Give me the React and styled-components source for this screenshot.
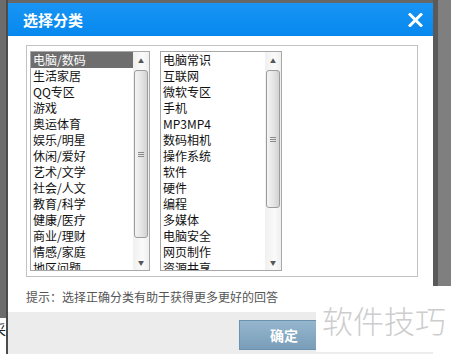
import React from "react";
import styled, { createGlobalStyle } from "styled-components";

const GlobalStyle = createGlobalStyle`
  html, body {
    margin: 0;
    padding: 0;
    background: #ffffff;
  }
  body {
    font-family: "Noto Sans CJK SC", "Liberation Sans", sans-serif;
  }
`;

const mainItems = [
  "电脑/数码",
  "生活家居",
  "QQ专区",
  "游戏",
  "奥运体育",
  "娱乐/明星",
  "休闲/爱好",
  "艺术/文学",
  "社会/人文",
  "教育/科学",
  "健康/医疗",
  "商业/理财",
  "情感/家庭",
  "地区问题",
];

const subItems = [
  "电脑常识",
  "互联网",
  "微软专区",
  "手机",
  "MP3MP4",
  "数码相机",
  "操作系统",
  "软件",
  "硬件",
  "编程",
  "多媒体",
  "电脑安全",
  "网页制作",
  "资源共享",
];

const ListBox = ({ items, width, thumbHeight, selected }) => (
  <Box $width={width}>
    <Items>
      {items.map((item, i) => (
        <Item key={item} $selected={i === selected}>
          {item}
        </Item>
      ))}
    </Items>
    <ScrollBar>
      <Arrow>▲</Arrow>
      <Track>
        <Thumb style={{ height: thumbHeight }}>
          <Grip />
        </Thumb>
      </Track>
      <Arrow>▼</Arrow>
    </ScrollBar>
  </Box>
);

const App = () => {
  return (
    <>
      <GlobalStyle />
      <Page>
        <LeftStrip>
          <StripTop />
          <StripBottom>采</StripBottom>
        </LeftStrip>

        <Dialog>
          <TitleBar>
            <Title>选择分类</Title>
            <CloseButton aria-label="close">
              <svg width="15" height="14" viewBox="0 0 15 14">
                <path
                  d="M2 1.5 L13 12.5 M13 1.5 L2 12.5"
                  stroke="#ffffff"
                  strokeWidth="3"
                  strokeLinecap="square"
                  fill="none"
                />
              </svg>
            </CloseButton>
          </TitleBar>

          <Body>
            <Frame>
              <ListBox items={mainItems} width={120} thumbHeight={168} selected={0} />
              <ListBox items={subItems} width={122} thumbHeight={138} selected={-1} />
            </Frame>
            <Tip>提示：选择正确分类有助于获得更多更好的回答</Tip>
          </Body>

          <Footer>
            <OkButton>确定</OkButton>
          </Footer>
        </Dialog>

        <RightStrip>
          <RightTop />
        </RightStrip>

        <Watermark>软件技巧</Watermark>
      </Page>
    </>
  );
};

// Styled Components
const Page = styled.div`
  position: relative;
  width: 451px;
  height: 354px;
  overflow: hidden;
  display: grid;
  grid-template-columns: 8px 425px 1fr;
  background: #ffffff;
`;

const LeftStrip = styled.div`
  display: flex;
  flex-direction: column;
  border-right: 2px solid #4b4b4b;
`;

const StripTop = styled.div`
  flex: 1;
  background: #6c6c6c;
`;

const StripBottom = styled.div`
  height: 36px;
  background: #ffffff;
  overflow: hidden;
  font-size: 14px;
  line-height: 22px;
  color: #222;
  text-indent: -8px;
  white-space: nowrap;
`;

const Dialog = styled.div`
  display: flex;
  flex-direction: column;
  padding-top: 3px;
  background: linear-gradient(#676767 0, #676767 3px, transparent 3px);
`;

const TitleBar = styled.div`
  height: 33px;
  display: flex;
  align-items: center;
  justify-content: space-between;
  padding: 0 10px 0 15px;
  background: linear-gradient(#1995f4, #0688ee);
`;

const Title = styled.div`
  color: #ffffff;
  font-size: 15px;
  font-weight: 700;
`;

const CloseButton = styled.div`
  width: 15px;
  height: 14px;
  display: flex;
`;

const Body = styled.div`
  height: 276px;
  box-sizing: border-box;
  padding: 9px 15px 0 18px;
  background: #ffffff;
`;

const Frame = styled.div`
  height: 232px;
  box-sizing: border-box;
  border: 1px solid #c2c2c2;
  padding: 5px 3px;
  display: flex;
  gap: 10px;
`;

const Box = styled.div`
  width: ${({ $width }) => $width}px;
  height: 220px;
  box-sizing: border-box;
  border: 1px solid #a8a8a8;
  display: flex;
  overflow: hidden;
`;

const Items = styled.div`
  flex: 1;
  overflow: hidden;
`;

const Item = styled.div`
  height: 16px;
  line-height: 16px;
  padding-left: 2px;
  font-size: 12px;
  white-space: nowrap;
  color: ${({ $selected }) => ($selected ? "#ffffff" : "#111111")};
  background: ${({ $selected }) => ($selected ? "#6e6e6e" : "transparent")};
`;

const ScrollBar = styled.div`
  width: 16px;
  display: flex;
  flex-direction: column;
  background: linear-gradient(90deg, #f0f0f0, #fafafa 60%, #efefef);
`;

const Arrow = styled.div`
  height: 16px;
  display: flex;
  align-items: center;
  justify-content: center;
  font-size: 6px;
  color: #555555;
`;

const Track = styled.div`
  flex: 1;
  padding: 2px 1px 0;
`;

const Thumb = styled.div`
  box-sizing: border-box;
  border: 1px solid #9c9c9c;
  border-radius: 3px;
  background: linear-gradient(90deg, #f4f4f4, #e6e6e6 50%, #d2d2d2);
  display: flex;
  align-items: center;
  justify-content: center;
`;

const Grip = styled.div`
  width: 6px;
  height: 5px;
  background: repeating-linear-gradient(#8a8a8a 0, #8a8a8a 1px, transparent 1px, transparent 2px);
`;

const Tip = styled.div`
  height: 35px;
  box-sizing: border-box;
  padding-top: 12px;
  line-height: 16px;
  font-size: 12px;
  color: #555555;
`;

const Footer = styled.div`
  flex: 1;
  background: #ececec;
  padding: 8px 0 0 231px;
`;

const OkButton = styled.button`
  width: 90px;
  height: 30px;
  border: 1px solid #6a91ad;
  background: linear-gradient(#95b6cd, #7a9eb9);
  color: #ffffff;
  font-family: "Noto Sans CJK SC", sans-serif;
  font-size: 14px;
  font-weight: 700;
  padding: 0;
`;

const RightStrip = styled.div`
  display: flex;
  flex-direction: column;
`;

const RightTop = styled.div`
  height: 286px;
  background: #7f7f7f;
  border-left: 5px solid #5a5a5a;
`;

const Watermark = styled.div`
  position: absolute;
  left: 316px;
  top: 286px;
  width: 135px;
  height: 66px;
  background: #ffffff;
  display: flex;
  align-items: center;
  padding-left: 6px;
  box-sizing: border-box;
  font-size: 31px;
  font-weight: 300;
  color: #cdcdcd;
  white-space: nowrap;
`;

export default App;
